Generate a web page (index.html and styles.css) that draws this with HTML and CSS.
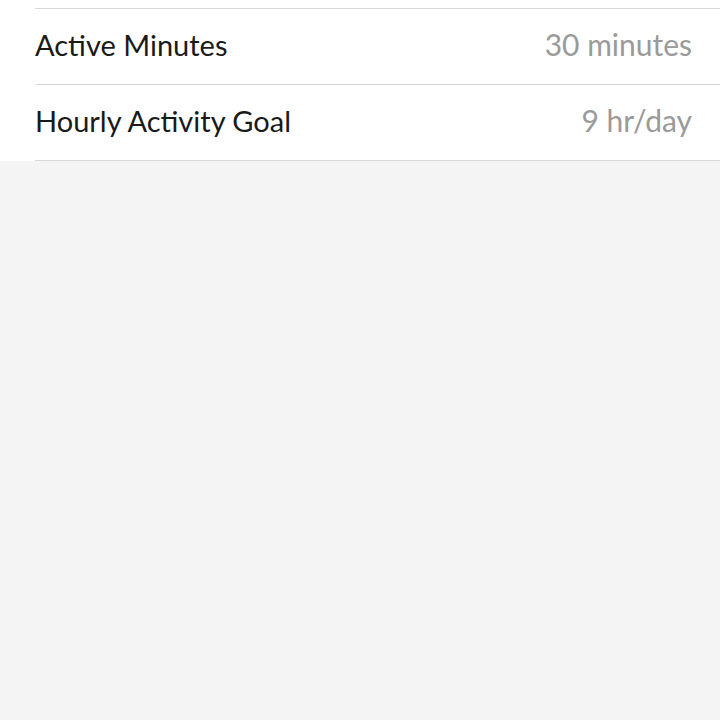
FILE: index.html
```html
<!DOCTYPE html>
<html>
<head>
<meta charset="utf-8">
<link rel="stylesheet" href="styles.css">
</head>
<body>
<div class="list">
  <div class="row row-cut"></div>
  <div class="row">
    <span class="label">Active Minutes</span>
    <span class="value">30 minutes</span>
  </div>
  <div class="row">
    <span class="label">Hourly Activity Goal</span>
    <span class="value">9 hr/day</span>
  </div>
</div>
</body>
</html>
```
FILE: styles.css
```css
html, body {
  margin: 0;
  padding: 0;
  background: #f4f4f4;
  font-family: Lato, "Open Sans", sans-serif;
}
.list {
  background: #ffffff;
  padding-left: 35px;
}
.row {
  display: flex;
  align-items: center;
  justify-content: space-between;
  height: 70px;
  padding-bottom: 5px;
  border-bottom: 1px solid #d8d8d8;
  padding-right: 28px;
  box-sizing: content-box;
}
.row-cut {
  height: 8px;
  padding-bottom: 0;
}
.label {
  font-size: 29px;
  color: #1a1a1a;
}
.value {
  font-size: 30px;
  color: #9a9a9a;
}
```
